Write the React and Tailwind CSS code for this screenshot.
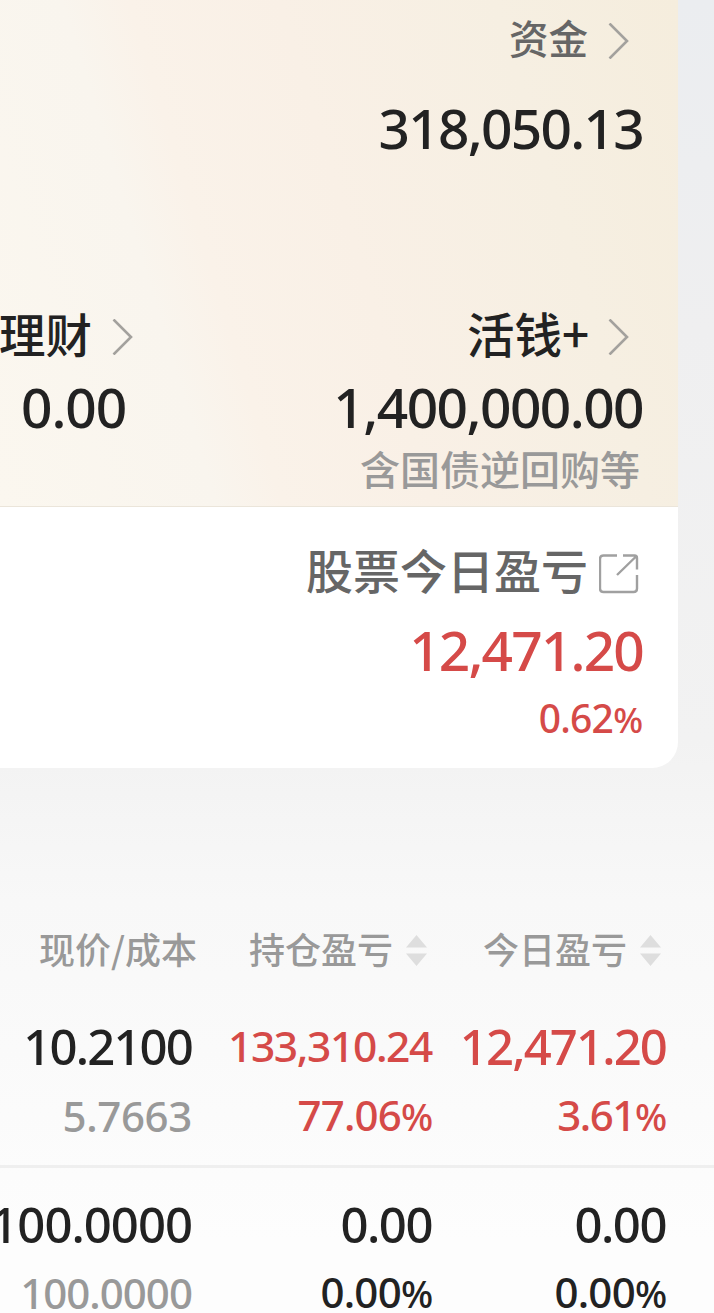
const sans = "font-['Noto_Sans','Noto_Sans_CJK_SC',sans-serif] font-medium";
const cjk = "font-['Noto_Sans_CJK_SC',sans-serif] font-medium whitespace-nowrap";

function Num({ children, className = "tracking-[-0.02em]" }) {
  return <span className={`${sans} whitespace-nowrap ${className}`}>{children}</span>;
}

function Percent({ value, className = "" }) {
  return (
    <Num className={className}>
      {value}
      <span className="text-[0.9em] tracking-[-0.03em]">%</span>
    </Num>
  );
}

function Chevron() {
  return (
    <svg className="mt-[7px] h-9 w-6 shrink-0 text-[#a3a19d]" viewBox="0 0 24 36" fill="none" stroke="currentColor" strokeWidth="2.6">
      <path d="M1.5 0.5 19 18 1.5 35.5" />
    </svg>
  );
}

function OpenIcon() {
  return (
    <svg className="mt-[9px] size-10 shrink-0 text-[#a0a0a0]" viewBox="0 0 40 40" fill="none" stroke="currentColor" strokeWidth="2.4">
      <path d="M18 1.5H4.5Q1 1.5 1 5V34.500Q1 38 4.500 38H34.500Q38 38 38 34.500V21" />
      <path d="M24 1.500H35.500Q38 1.500 38 4V15.500M37 2.500 18 21" />
    </svg>
  );
}

function SortIcon() {
  return (
    <svg className="mt-[5px] h-[31px] w-[21px] shrink-0 text-[#dedede]" viewBox="0 0 21 31" fill="currentColor">
      <path d="M10.500 0 21 12.500H0ZM0 18.500H21L10.500 31Z" />
    </svg>
  );
}

function Row({ cells, className }) {
  return (
    <div className={`grid grid-cols-[192px_240px_234px] items-center ${className}`}>
      {cells.map((cell, i) => (
        <div key={i} className="flex min-w-0 justify-end">{cell}</div>
      ))}
    </div>
  );
}

export default function App() {
  return (
    <main className="h-[1313px] w-[714px] overflow-hidden bg-[linear-gradient(180deg,#ebedf0_0px,#efeff0_330px,#f2f2f2_740px,#f8f8f8_900px,#fafafa_1050px,#fdfdfd_1240px)] text-[#222]">
      <section className="flex h-[768px] w-[678px] flex-col overflow-hidden rounded-br-[26px] bg-white">
        <div className="flex h-[507px] flex-col border-b border-[#ebe5da] bg-[linear-gradient(73deg,#fbf7ef_0%,#f9f5ee_26%,#faf2e9_34%,#f9f0e6_52%,#f6efe2_78%,#f5eddd_100%)] pt-[17px]">
          <div className="flex h-10 items-center justify-end gap-[20px] pr-[46px]">
            <span className={`${cjk} text-[39.5px] leading-10 text-[#666]`}>资金</span>
            <Chevron />
          </div>
          <div className="mt-[41px] flex h-[60px] items-center justify-end pr-[35px]">
            <Num className="text-[55px] leading-[60px] tracking-[-0.031em]">318,050.13</Num>
          </div>
          <div className="mt-[145px] grid h-[60px] grid-cols-[136px_1fr] items-center">
            <div className="flex items-center justify-end gap-[20px]">
              <span className={`${cjk} text-[46.5px] leading-[60px]`}>理财</span>
              <Chevron />
            </div>
            <div className="flex items-center justify-end gap-[19px] pr-[46px]">
              <span className={`${cjk} text-[47.5px] leading-[60px]`}>活钱+</span>
              <Chevron />
            </div>
          </div>
          <div className="mt-3.5 grid h-[60px] grid-cols-[126px_1fr] items-center text-right">
            <Num className="text-[55px] leading-[60px] tracking-[-0.02em]">0.00</Num>
            <Num className="pr-[35px] text-[55px] leading-[60px] tracking-[-0.028em]">1,400,000.00</Num>
          </div>
          <div className={`${cjk} mt-1.5 h-[50px] pr-[38px] text-right text-[40px] leading-[50px] text-[#999]`}>
            含国债逆回购等
          </div>
        </div>
        <div className="flex flex-col pt-8">
          <div className="flex h-[60px] items-center justify-end gap-[11px] pr-[39px]">
            <span className={`${cjk} text-[47px] leading-[60px] text-[#666]`}>股票今日盈亏</span>
            <OpenIcon />
          </div>
          <div className="mt-[21px] flex h-[60px] items-center justify-end pr-[35px] text-[#d54a48]">
            <Num className="text-[55px] leading-[60px] tracking-[-0.033em]">12,471.20</Num>
          </div>
          <div className="mt-[18px] flex h-10 items-center justify-end pr-[36px] text-[#d54a48]">
            <Percent value="0.62" className="text-[39px] leading-10 tracking-[-0.02em]" />
          </div>
        </div>
      </section>

      <section className="flex flex-col pt-[155px]">
        <div className={`${cjk} grid h-[50px] grid-cols-[197px_230px_234px] items-center text-[36px] leading-[50px] text-[#999]`}>
          <div className="text-right">现价/成本</div>
          <div className="flex items-center justify-end gap-[13px]"><span>持仓盈亏</span><SortIcon /></div>
          <div className="flex items-center justify-end gap-[13px]"><span>今日盈亏</span><SortIcon /></div>
        </div>
        <Row
          className="mt-[43px] h-[60px] text-[49px] leading-[60px]"
          cells={[
            <Num className="tracking-[-0.0375em]">10.2100</Num>,
            <Num className="text-[42.5px] tracking-[-0.032em] text-[#d54a48]">133,310.24</Num>,
            <Num className="tracking-[-0.038em] text-[#d54a48]">12,471.20</Num>,
          ]}
        />
        <Row
          className="mt-3.5 h-[50px] text-[42px] leading-[50px] text-[#d54a48]"
          cells={[
            <Num className="tracking-[-0.008em] text-[#999]">5.7663</Num>,
            <Percent value="77.06" className="tracking-[-0.02em]" />,
            <Percent value="3.61" className="tracking-[-0.035em]" />,
          ]}
        />
        <div className="mt-[25px] h-[3px] bg-[#efefef]" />
        <Row
          className="mt-[26px] h-[60px] text-[49px] leading-[60px]"
          cells={[<Num>100.0000</Num>, <Num className="tracking-[-0.03em]">0.00</Num>, <Num className="tracking-[-0.03em]">0.00</Num>]}
        />
        <Row
          className="mt-[13px] h-[47px] text-[42px] leading-[50px]"
          cells={[<Num className="tracking-[-0.023em] text-[#999]">100.0000</Num>, <Percent value="0.00" className="tracking-[-0.018em]" />, <Percent value="0.00" className="tracking-[-0.018em]" />]}
        />
      </section>
    </main>
  );
}
